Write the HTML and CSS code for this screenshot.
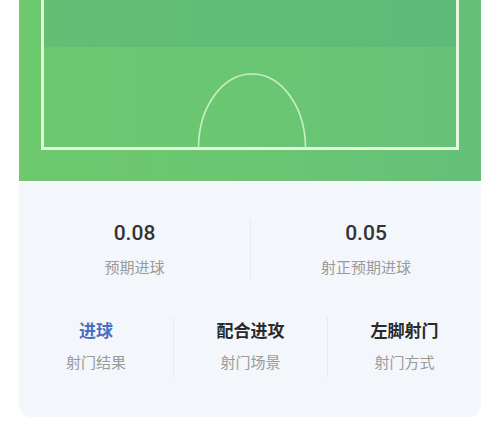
FILE: index.html
```html
<!DOCTYPE html>
<html lang="zh">
<head>
<meta charset="utf-8">
<link rel="stylesheet" href="styles.css">
</head>
<body>
<div class="wrap">
  <div class="field">
    <div class="box">
      <div class="band"></div>
      <svg class="arc" width="109" height="76" viewBox="0 0 109 76">
        <path d="M1 76 A53.5 74 0 0 1 108 76" fill="none" stroke="#c9f0c4" stroke-width="1.6"/>
      </svg>
    </div>
  </div>
  <div class="panel">
    <div class="row two">
      <div class="cell">
        <div class="num">0.08</div>
        <div class="lbl">预期进球</div>
      </div>
      <div class="cell">
        <div class="num">0.05</div>
        <div class="lbl">射正预期进球</div>
      </div>
    </div>
    <div class="row three">
      <div class="cell">
        <div class="ttl blue">进球</div>
        <div class="lbl">射门结果</div>
      </div>
      <div class="cell">
        <div class="ttl">配合进攻</div>
        <div class="lbl">射门场景</div>
      </div>
      <div class="cell">
        <div class="ttl">左脚射门</div>
        <div class="lbl">射门方式</div>
      </div>
    </div>
  </div>
</div>
</body>
</html>
```

FILE: styles.css
```css
html, body {
  margin: 0;
  padding: 0;
  background: #ffffff;
}
body {
  font-family: "Noto Sans CJK SC", "Noto Sans", sans-serif;
  width: 500px;
  height: 440px;
  overflow: hidden;
}
.wrap {
  padding: 0 19px;
}
.field {
  height: 181px;
  background: linear-gradient(90deg, #6dc96c 0%, #6bc673 50%, #64c078 100%);
  padding: 0 22px;
  box-sizing: border-box;
}
.box {
  position: relative;
  height: 150px;
  border: 3px solid #e6f8dc;
  border-top: none;
  box-sizing: border-box;
  background: linear-gradient(90deg, #6cc870 0%, #6bc673 50%, #66c277 100%);
}
.band {
  height: 47px;
  background: linear-gradient(90deg, #64be74 0%, #5fbd78 50%, #5cbb79 100%);
}
.arc {
  position: absolute;
  left: 50%;
  bottom: -1px;
  transform: translateX(-50%);
  margin-left: 2px;
}
.panel {
  margin-top: 2px;
  background: #f3f6fa;
  border-radius: 0 0 12px 12px;
  padding: 36px 0 0;
  box-sizing: border-box;
  height: 234px;
}
.row {
  display: grid;
}
.row.two {
  grid-template-columns: 1fr 1fr;
}
.row.three {
  grid-template-columns: 1fr 1fr 1fr;
  margin-top: 38px;
}
.cell {
  display: flex;
  flex-direction: column;
  align-items: center;
  height: 60px;
  border-left: 1px solid #e7eaef;
}
.cell:first-child {
  border-left: none;
}
.num {
  font-family: "Roboto", "Noto Sans", sans-serif;
  font-size: 21px;
  font-weight: 500;
  color: #333333;
  line-height: 28px;
}
.lbl {
  font-size: 15px;
  color: #9a9a9a;
  line-height: 20px;
  margin-top: 10px;
}
.ttl {
  font-size: 17px;
  font-weight: 700;
  color: #2a2a2a;
  line-height: 26px;
}
.ttl.blue {
  color: #4a6fc2;
}
.three .lbl {
  margin-top: 9px;
}
```
